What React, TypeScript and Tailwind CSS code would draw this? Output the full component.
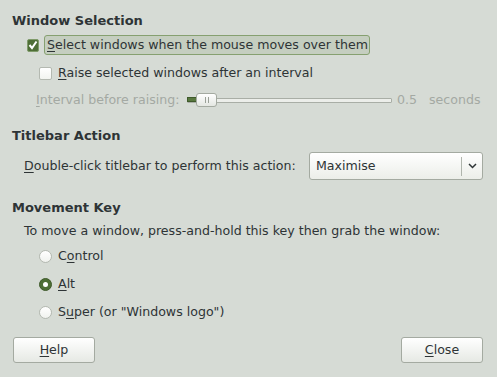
import React from "react"

function U({ children }: { children: React.ReactNode }) {
  return <span className="underline underline-offset-2">{children}</span>
}

function Radio({ checked }: { checked?: boolean }) {
  return (
    <span
      className={
        "w-[13px] h-[13px] rounded-full border flex items-center justify-center " +
        (checked ? "bg-[#4e6e36] border-[#3f5a2b]" : "bg-gradient-to-b from-white to-[#f0f2ee] border-[#b4b9b1]")
      }
    >
      {checked && <span className="w-[5px] h-[5px] rounded-full bg-white" />}
    </span>
  )
}

function Button({ children }: { children: React.ReactNode }) {
  return (
    <button className="w-[82px] h-[26px] rounded-[3px] border border-[#a4aaa1] bg-gradient-to-b from-white to-[#e6e9e4] text-[#2e3436]">
      {children}
    </button>
  )
}

export default function App() {
  return (
    <div className="w-[497px] h-[377px] bg-[#d6dbd5] font-['DejaVu_Sans',sans-serif] text-[12.6px] text-[#2e3436] pt-[12px] overflow-hidden whitespace-nowrap">
      <div className="px-3 h-[18px] font-bold text-[13px] leading-[18px]">Window Selection</div>

      <div className="mt-[5px] h-[20px] flex items-center pl-[27px]">
        <span className="w-[12px] h-[13px] rounded-[2px] bg-[#4e6e36] border border-[#7f9b6a] flex items-center justify-center">
          <svg width="10" height="10" viewBox="0 0 10 10">
            <path d="M1.5 5 L4 8 L8.5 1.5" stroke="white" strokeWidth="2" fill="none" />
          </svg>
        </span>
        <span className="ml-[5px] h-[20px] w-[326px] rounded-[3px] border border-[#86a070] bg-[#c5cec0] pl-[2px] leading-[18px]">
          <U>S</U>elect windows when the mouse moves over them
        </span>
      </div>

      <div className="mt-[8px] h-[20px] flex items-center pl-[39px]">
        <span className="w-[13px] h-[13px] rounded-[2px] bg-gradient-to-b from-white to-[#f2f4f0] border border-[#b4b9b1]" />
        <span className="ml-[6px]">
          <U>R</U>aise selected windows after an interval
        </span>
      </div>

      <div className="mt-[7px] h-[20px] flex items-center pl-[36px] text-[#a4a9a3]">
        <span className="w-[151px]">
          <U>I</U>nterval before raising:
        </span>
        <div className="relative w-[205px] h-[14px] flex items-center">
          <div className="w-full h-[5px] border border-[#a9aea6] bg-[#eceeea] rounded-[1px]" />
          <div className="absolute left-0 top-[4px] w-[10px] h-[5px] bg-[#58783f] border border-[#3f5a2b]" />
          <div className="absolute left-[9px] top-0 w-[21px] h-[14px] rounded-[3px] border border-[#a4aaa1] bg-gradient-to-b from-white to-[#e4e7e2] flex items-center justify-center gap-[2px]">
            <span className="w-px h-[6px] bg-[#9aa097]" />
            <span className="w-px h-[6px] bg-[#9aa097]" />
          </div>
        </div>
        <span className="ml-[5px] w-[32px]">0.5</span>
        <span>seconds</span>
      </div>

      <div className="mt-[17px] px-3 h-[18px] font-bold text-[13px] leading-[18px]">Titlebar Action</div>

      <div className="mt-[7px] h-[28px] flex items-center pl-[24px]">
        <span className="w-[285px]">
          <U>D</U>ouble-click titlebar to perform this action:
        </span>
        <div className="w-[174px] h-[28px] rounded-[3px] border border-[#a4aaa1] bg-gradient-to-b from-white to-[#eceee9] flex items-center">
          <span className="flex-1 pl-[6px]">Maximise</span>
          <span className="w-px h-[19px] bg-[#b0b5ad]" />
          <span className="w-[20px] flex justify-center">
            <svg width="9" height="6" viewBox="0 0 9 6">
              <path d="M1 1 L4.5 4.5 L8 1" stroke="#2e3436" strokeWidth="1.5" fill="none" />
            </svg>
          </span>
        </div>
      </div>

      <div className="mt-[19px] px-3 h-[18px] font-bold text-[13px] leading-[18px]">Movement Key</div>

      <div className="mt-[5px] h-[18px] pl-[24px] leading-[18px]">
        To move a window, press-and-hold this key then grab the window:
      </div>

      <div className="mt-[6px] flex flex-col gap-[8px] pl-[39px]">
        <div className="h-[20px] flex items-center">
          <Radio />
          <span className="ml-[6px]">
            C<U>o</U>ntrol
          </span>
        </div>
        <div className="h-[20px] flex items-center">
          <Radio checked />
          <span className="ml-[6px]">
            <U>A</U>lt
          </span>
        </div>
        <div className="h-[20px] flex items-center">
          <Radio />
          <span className="ml-[6px]">
            S<U>u</U>per (or "Windows logo")
          </span>
        </div>
      </div>

      <div className="mt-[15px] flex justify-between pl-[13px] pr-[14px]">
        <Button>
          <U>H</U>elp
        </Button>
        <Button>
          <U>C</U>lose
        </Button>
      </div>
    </div>
  )
}
